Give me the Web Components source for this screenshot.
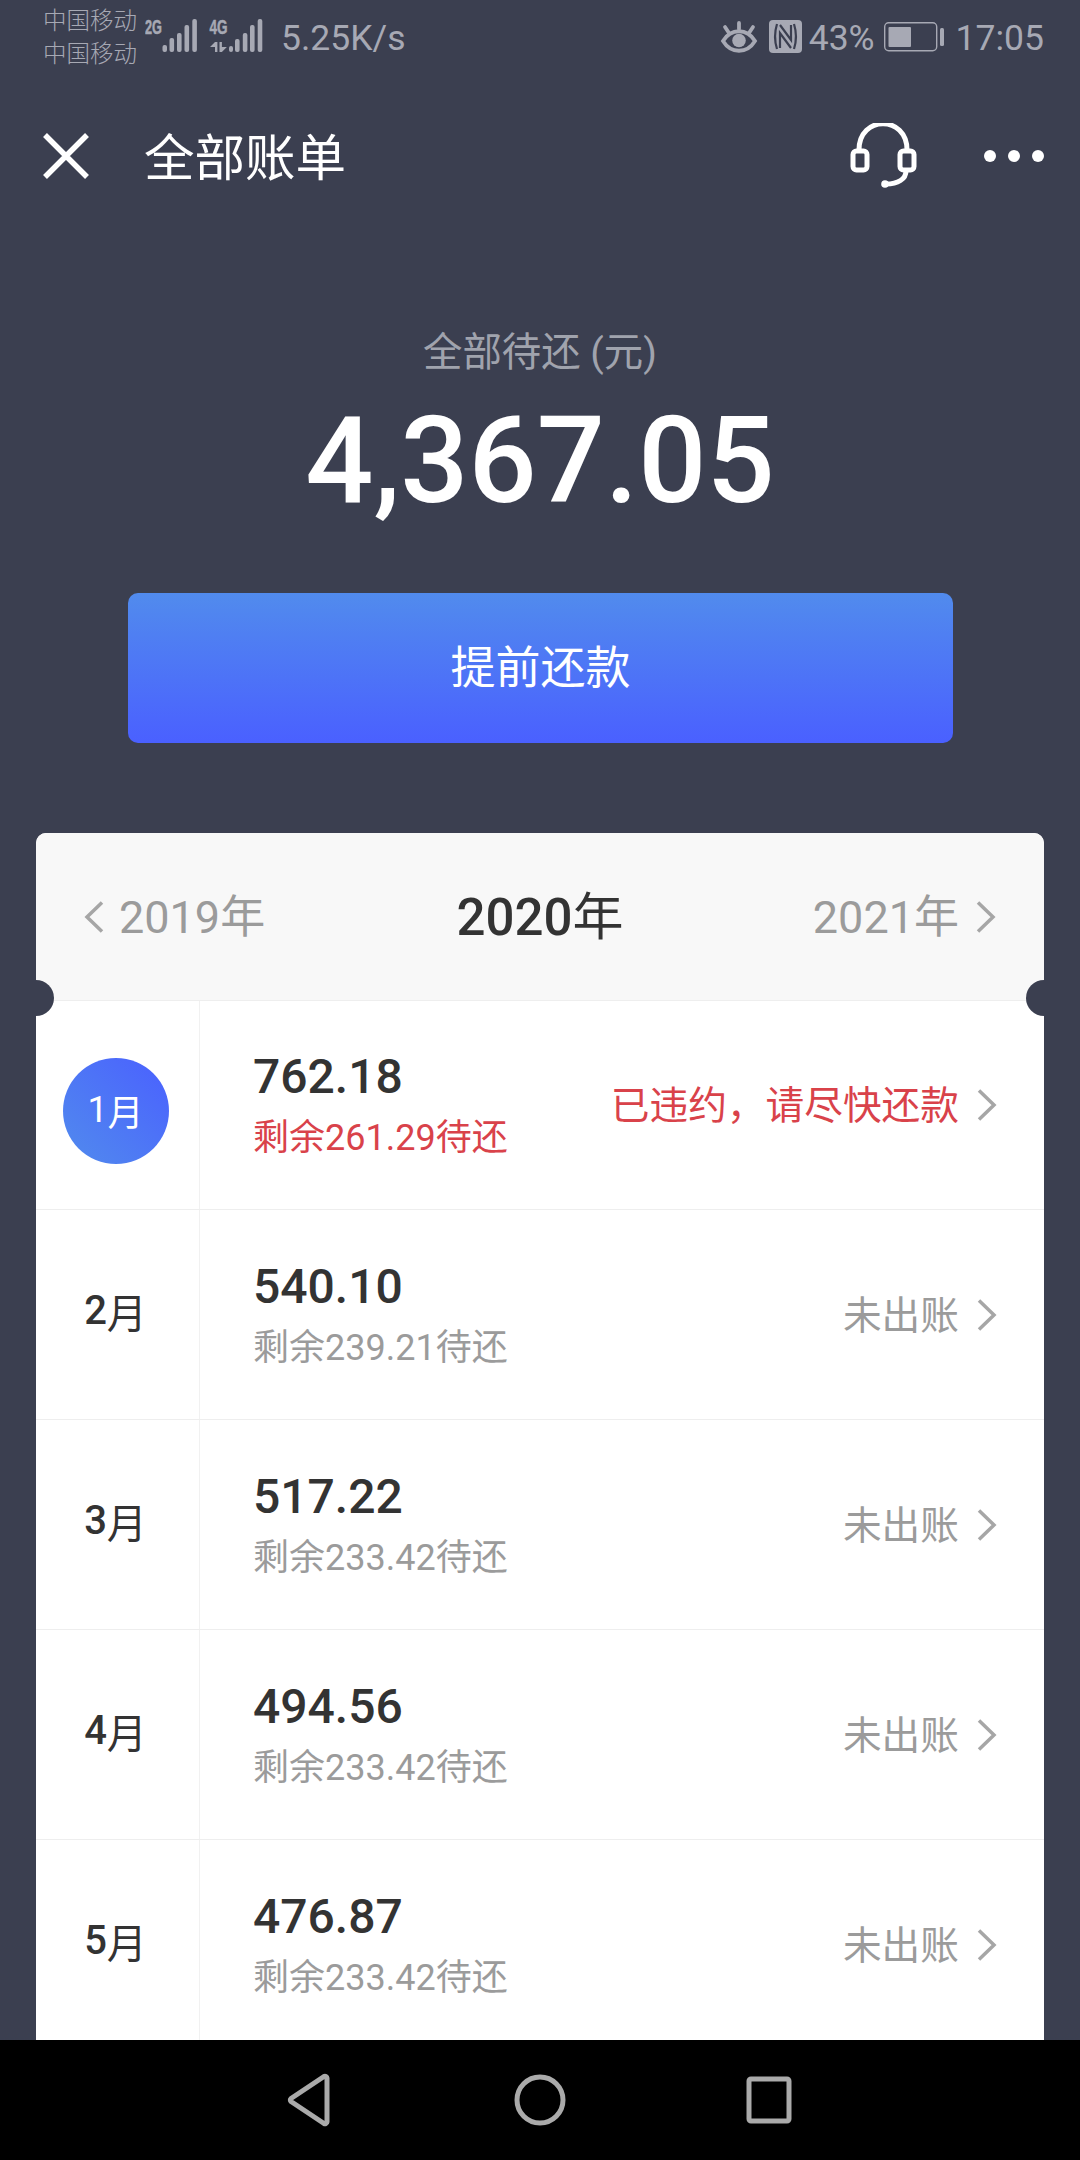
<!DOCTYPE html>
<html lang="zh-CN"><head><meta charset="utf-8"><title>全部账单</title>
<style>
html,body{margin:0;padding:0;background:#3b3f50}
body{width:1080px;height:2160px;overflow:hidden;font-family:Roboto,"Noto Sans CJK SC",sans-serif}
</style></head><body>
<x-app>
  <x-status></x-status>
  <x-topbar title="全部账单"></x-topbar>
  <x-summary label="全部待还 (元)" amount="4,367.05" action="提前还款"></x-summary>
  <x-card>
    <x-year prev="2019年" cur="2020" next="2021年"></x-year>
    <x-bill month="1" amount="762.18" rest="261.29" status="已违约，请尽快还款" alert></x-bill>
    <x-bill month="2" amount="540.10" rest="239.21" status="未出账"></x-bill>
    <x-bill month="3" amount="517.22" rest="233.42" status="未出账"></x-bill>
    <x-bill month="4" amount="494.56" rest="233.42" status="未出账"></x-bill>
    <x-bill month="5" amount="476.87" rest="233.42" status="未出账"></x-bill>
  </x-card>
  <x-navbar></x-navbar>
</x-app>
<script>
const FONT='Roboto,"Noto Sans CJK SC",sans-serif';
function def(name,render){
  customElements.define(name,class extends HTMLElement{
    connectedCallback(){
      if(this.shadowRoot)return;
      const r=this.attachShadow({mode:'open'});
      r.innerHTML=render(this);
    }
  });
}
const chev=(dir)=>`<svg class="chev" width="20" height="32" viewBox="0 0 20 32" fill="none" stroke="#a6a6a6" stroke-width="3.5" stroke-linejoin="miter"><path d="${dir==='l'?'M18 1.500 3 16l15 14.500':'M2 1.500 17 16 2 30.500'}"/></svg>`;

def('x-app',()=>`<style>:host{display:flex;flex-direction:column;width:1080px;height:2160px;overflow:hidden;background:#3b3f50}
::slotted(x-navbar){flex:none}</style><slot></slot>`);

def('x-status',()=>`<style>
:host{display:flex;height:76px;flex:none;color:#a7a9b4;font-family:${FONT};box-sizing:border-box}
.l,.r{display:flex;align-items:flex-start}
.l{padding-left:43px}
.r{margin-left:auto;padding-right:36px}
.car{font-size:23.500px;line-height:33px;width:102px;padding-top:5px;font-weight:300}
svg{display:block;flex:none}
.sp{font-size:35.500px;line-height:40px;margin-left:18px;padding-top:18px}
.r .t{font-size:35.500px;line-height:40px;padding-top:18px}
</style>
<div class="l"><div class="car">中国移动<br>中国移动</div>
<svg style="margin-top:15px" width="118" height="40" viewBox="145 15 118 40" fill="#a7a9b4">
<text x="145" y="33.500" font-family="'Liberation Sans',sans-serif" font-weight="700" font-size="20" stroke="#a7a9b4" stroke-width=".5" textLength="17" lengthAdjust="spacingAndGlyphs">2G</text>
<rect x="162.500" y="45" width="4.500" height="7" rx="2"/>
<rect x="169.500" y="38" width="4.600" height="14" rx="2"/><rect x="177" y="33" width="4.600" height="19" rx="2"/><rect x="184.500" y="25" width="4.600" height="27" rx="2"/><rect x="192.300" y="19" width="4.600" height="33" rx="2"/>
<text x="209.500" y="33.500" font-family="'Liberation Sans',sans-serif" font-weight="700" font-size="20" stroke="#a7a9b4" stroke-width=".5" textLength="18" lengthAdjust="spacingAndGlyphs">4G</text>
<path d="M215 42h2.400v10H215v-5h-5zM219.500 42h2.400v5h5L221.900 52h-2.400z"/>
<rect x="229" y="46" width="4" height="6" rx="2"/>
<rect x="235" y="39" width="4.600" height="13" rx="2"/><rect x="242.800" y="33" width="4.600" height="19" rx="2"/><rect x="250" y="25" width="4.600" height="27" rx="2"/><rect x="257.700" y="19" width="4.600" height="33" rx="2"/>
</svg>
<div class="sp">5.25K/s</div></div>
<div class="r">
<svg style="margin-top:20px" width="38" height="34" viewBox="720 20 38 34" fill="none" stroke="#a7a9b4" stroke-width="3.800" stroke-linecap="round">
<path d="M723 41c8-13 24-13 32 0-8 13-24 13-32 0z"/><path d="M725 27l4 6M739 23v6M753 27l-4 6"/><circle cx="739" cy="40.500" r="6.800" fill="#a7a9b4" stroke="none"/></svg>
<svg style="margin-top:20px;margin-left:11px" width="33" height="33" viewBox="0 0 33 33"><rect width="33" height="33" rx="4" fill="#a7a9b4"/><path d="M8 4C5.500 12 5.500 21 8 29M25 4c2.500 8 2.500 17 0 25M11 5l11 15V5M11 28V13l11 15" fill="none" stroke="#3b3f50" stroke-width="2.200"/></svg>
<div class="t" style="margin-left:7px">43%</div>
<svg style="margin-top:22px;margin-left:9px" width="60" height="30" viewBox="884 22 60 30"><rect x="884.700" y="22.700" width="52" height="28" rx="4" fill="none" stroke="#a7a9b4" stroke-width="1.400"/><rect x="888.500" y="27" width="22.500" height="20" rx="1" fill="#a7a9b4"/><rect x="940" y="28" width="4" height="18" rx="1.500" fill="#a7a9b4"/></svg>
<div class="t" style="margin-left:12px">17:05</div>
</div>`);

def('x-topbar',e=>`<style>
:host{display:flex;align-items:center;height:160px;flex:none;box-sizing:border-box;padding:0 36px 0 43px;color:#fff;font-family:${FONT}}
.ti{font-size:50.500px;line-height:60px;margin-left:55px;padding-top:6px;font-weight:400;flex:1}
svg{display:block;flex:none}
</style>
<svg width="46" height="46" viewBox="0 0 46 46" fill="none" stroke="#fff" stroke-width="5.500"><path d="M2 2l42 42M44 2 2 44"/></svg>
<div class="ti">${e.getAttribute('title')}</div>
<svg width="68" height="66" viewBox="850 123 68 66" fill="none" stroke="#fff" stroke-width="5" stroke-linecap="round">
<path d="M859 150c0-35 48-35 48 0"/>
<rect x="853" y="151" width="14" height="19" rx="3.500"/><rect x="900" y="151" width="14" height="19" rx="3.500"/>
<path d="M906 171c0 8-8 13-20 13"/><circle cx="885" cy="184" r="3.800" fill="#fff" stroke="none"/></svg>
<svg style="margin-left:66px" width="60" height="12" viewBox="0 0 60 12" fill="#fff"><circle cx="6" cy="6" r="6"/><circle cx="30" cy="6" r="6"/><circle cx="54" cy="6" r="6"/></svg>`);

def('x-summary',e=>`<style>
:host{display:block;flex:none;font-family:${FONT};text-align:center;padding-top:92px}
.lb{color:#a0a3ad;font-size:39.400px;line-height:50px;font-weight:400}
.am{color:#fff;font-size:120px;font-weight:500;line-height:140px;margin-top:13px}
.btn{margin:62px 127px 0 128px;height:150px;box-sizing:border-box;padding-bottom:8px;border-radius:10px;background:linear-gradient(180deg,#518bed,#4a60ff);color:#fff;font-size:45px;display:flex;align-items:center;justify-content:center}
</style>
<div class="lb">${e.getAttribute('label')}</div>
<div class="am">${e.getAttribute('amount')}</div>
<div class="btn">${e.getAttribute('action')}</div>`);

def('x-card',()=>`<style>
:host{display:block;flex:1;min-height:0;margin:90px 36px 0 36px;background:#fff;border-radius:10px 10px 0 0;position:relative;overflow:hidden;font-family:${FONT}}
.n{position:absolute;top:147px;width:36px;height:36px;border-radius:50%;background:#3b3f50;z-index:2}
.a{left:-18px}.b{right:-18px}
</style><slot></slot><div class="n a"></div><div class="n b"></div>`);

def('x-year',e=>`<style>
:host{display:flex;align-items:center;justify-content:space-between;height:168px;box-sizing:border-box;background:#f8f8f8;border-bottom:1px solid #eee;padding:0 48px;font-family:${FONT}}
.s{display:flex;align-items:center;gap:15px;color:#9b9b9b;font-size:45px;width:260px}
.s.r{justify-content:flex-end;gap:17px}
.s span{padding-bottom:7px}
.c{color:#333;font-size:51px;font-weight:500;padding-bottom:7px}
.c i{font-style:normal;font-weight:400}
svg{display:block;flex:none;margin-top:1px}
</style>
<div class="s">${chev('l')}<span>${e.getAttribute('prev')}</span></div>
<div class="c">${e.getAttribute('cur')}<i>年</i></div>
<div class="s r"><span>${e.getAttribute('next')}</span>${chev('r')}</div>`);

def('x-bill',e=>{const al=e.hasAttribute('alert');const c=al?'#d9424a':'#9b9b9b';const mo=`<b>${e.getAttribute('month')}</b><i>月</i>`;return `<style>
:host{display:flex;height:210px;box-sizing:border-box;border-bottom:1px solid #eee;font-family:${FONT}}
:host([alert]){height:209px}
.m{width:164px;flex:none;box-sizing:border-box;border-right:1px solid #f1f1f1;display:flex;align-items:center;justify-content:center;color:#333;font-size:40px;padding:0 4px 8px 0}
.m b{font-weight:500}.m i{font-style:normal;font-weight:400}
.dot{width:106px;height:106px;border-radius:50%;background:linear-gradient(45deg,#518bed,#4a60ff);color:#fff;font-size:36px;display:flex;align-items:center;justify-content:center;margin-top:20px;box-sizing:border-box;padding-bottom:2px}
.dot b{font-weight:400}
.b{flex:1;display:flex;flex-direction:column;padding:46px 0 0 53px;min-width:0}
:host([alert]) .b{padding-top:45px}
.a{color:#333;font-size:48px;font-weight:500;line-height:62px}
.rest{color:${c};font-size:36px;line-height:50px;margin-top:5px}
.st{display:flex;align-items:center;gap:18px;color:${c};font-size:38.700px;padding-right:47px}
.st span{padding-bottom:6px}
svg{display:block;flex:none}
</style>
<div class="m">${al?`<div class="dot">${mo}</div>`:mo}</div>
<div class="b"><div class="a">${e.getAttribute('amount')}</div><div class="rest">剩余${e.getAttribute('rest')}待还</div></div>
<div class="st"><span>${e.getAttribute('status')}</span>${chev('r')}</div>`});

def('x-navbar',()=>`<style>
:host{display:flex;align-items:center;justify-content:center;height:120px;flex:none;background:#000}
svg{display:block;flex:none}
</style>
<svg width="600" height="120" viewBox="240 2040 600 120" fill="none" stroke="#aaa" stroke-width="5" stroke-linejoin="round">
<path d="M327 2078v44a2 2 0 0 1-3 1.500l-33-22a2 2 0 0 1 0-3l33-22a2 2 0 0 1 3 1.500z"/>
<circle cx="540" cy="2100" r="23"/>
<rect x="749" y="2079" width="40" height="42" rx="2"/></svg>`);
</script>
</body></html>
